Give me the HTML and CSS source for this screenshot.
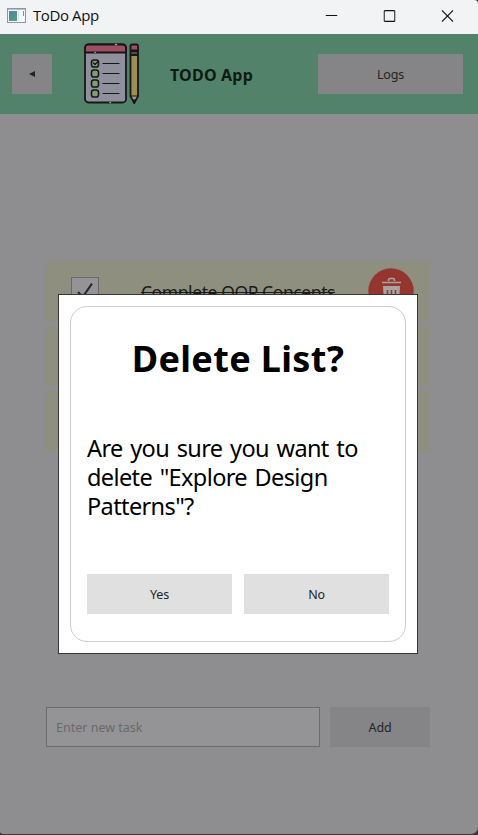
FILE: index.html
```html
<!DOCTYPE html>
<html lang="en">
<head>
<meta charset="utf-8">
<title>ToDo App</title>
<link rel="stylesheet" href="styles.css">
</head>
<body>
<div class="window">
  <header class="titlebar">
    <svg class="app-icon" width="19" height="16" viewBox="0 0 19 16"><defs><linearGradient id="ic" x1="0" y1="0" x2="1" y2="1"><stop offset="0" stop-color="#4c86a5"/><stop offset="1" stop-color="#55a080"/></linearGradient></defs><rect x=".5" y=".5" width="18" height="14" fill="#f5f8fa" stroke="#8d979f"/><path d="M1 1.5h17" stroke="#b8c1c7"/><rect x="2" y="3" width="8" height="10" fill="url(#ic)"/><path d="M11.5 3v10" stroke="#dce4e8"/><path d="M16.5 3v5" stroke="#62a18b"/></svg>
    <span class="app-name">ToDo App</span>
    <div class="controls">
      <svg width="12" height="12" viewBox="0 0 12 12"><path d="M0 5.5h12" stroke="#111" fill="none"/></svg>
      <svg width="12" height="12" viewBox="0 0 12 12"><rect x=".6" y=".6" width="10.8" height="10.8" rx="1" stroke="#111" stroke-width="1.2" fill="none"/></svg>
      <svg width="12" height="12" viewBox="0 0 12 12"><path d="M.4.4l11.2 11.2M11.6.4L.4 11.6" stroke="#111" stroke-width="1.2" fill="none"/></svg>
    </div>
  </header>
  <nav class="toolbar">
    <button class="btn back"><svg width="6" height="6" viewBox="0 0 6 6"><path d="M6 0v6L0 3z" fill="#222"/></svg></button>
    <svg class="logo" width="56" height="62" viewBox="0 0 56 62" stroke="#151719" stroke-width="1.8" stroke-linejoin="round" stroke-linecap="round">
      <rect x="1" y="1.5" width="41" height="58" rx="3.5" fill="#8f909c"/>
      <path d="M1 9.5V5q0-3.500 3.500-3.500H38.500Q42 1.500 42 5v4.500z" fill="#9e4f61"/>
      <path d="M31.500 1.500h1M11 9.500h.2M26 59.500h.5" stroke="#a4a5ad" stroke-width="1.500"/>
      <g fill="#7f9f72" stroke-width="1.600"><rect x="7.500" y="17" width="7" height="7" rx="2.300"/><rect x="7.500" y="27" width="7" height="7" rx="2.300"/><rect x="7.500" y="37" width="7" height="7" rx="2.300"/><rect x="7.500" y="47" width="7" height="7" rx="2.300"/></g>
      <path d="M9.500 20l1.500 1.500 3-3" fill="none" stroke-width="1.300"/>
      <path d="M19 20.500h16M19 30.500h16M19 40.500h16M19 50.500h16" stroke-width="1.200"/>
      <path d="M46.500 12h7.500v41l-3.750 7-3.750-7z" fill="#a08d55"/>
      <path d="M46.700 53h7.100l-3.550 6.500z" fill="#aa9282" stroke-width="1.200"/><path d="M49 57h2.500l-1.250 3z" fill="#151719" stroke-width="1"/>
      <path d="M46.500 7.500V3q0-1.500 1.500-1.500h4.500q1.500 0 1.500 1.500v4.500z" fill="#9e4f61"/>
      <path d="M46.500 8h7.500v4h-7.500z" fill="#4c4d52"/>
    </svg>
    <h1 class="brand">TODO App</h1>
    <button class="btn logs">Logs</button>
  </nav>
  <main class="content">
    <ul class="tasks">
      <li class="task">
        <span class="check"><svg width="28" height="28" viewBox="0 0 28 28"><path d="M6.500 15l5 5.500L21.500 6" fill="none" stroke="#2b2b2d" stroke-width="2.300"/></svg></span>
        <span class="task-name">Complete OOP Concepts</span>
        <span class="trash"><svg width="46" height="46" viewBox="0 0 46 46"><circle cx="23" cy="23" r="22.700" fill="#95352f"/><path d="M14 14.500h19M20.500 13v-1q0-1.500 1.500-1.500h3q1.500 0 1.500 1.500v1" fill="none" stroke="#aaa2a3" stroke-width="1.600"/><path d="M15 18h17l-1 16H16z" fill="#aaa2a3"/><path d="M19.500 22v9M23.500 22v9M27.500 22v9" stroke="#95352f" stroke-width="1.500"/></svg></span>
      </li>
      <li class="task"></li>
      <li class="task"></li>
    </ul>
    <form class="add-row">
      <input class="entry" placeholder="Enter new task">
      <button class="btn add" type="button">Add</button>
    </form>
  </main>
</div>
<div class="dialog">
  <div class="panel">
    <h2 class="question">Delete List?</h2>
    <p class="message">Are you sure you want to<br>delete "Explore Design<br>Patterns"?</p>
    <div class="actions"><button class="choice">Yes</button><button class="choice">No</button></div>
  </div>
</div>
</body>
</html>
```

FILE: styles.css
```css
* { box-sizing: border-box; }
body { margin: 0; background: #38383a; font-family: "Noto Sans", sans-serif; font-size: 12.5px; letter-spacing: -.2px; }
button, input { font: inherit; letter-spacing: inherit; border-radius: 0; padding: 0; }
.window { width: 478px; height: 834px; display: flex; flex-direction: column; overflow: hidden; background: #8e8e90; border-radius: 0 4px 7px 3px; }
.titlebar { height: 34px; flex: none; display: flex; align-items: center; background: #f1f3f5; padding: 0 24px 3px 7px; }
.app-name { font: 15px "Open Sans", sans-serif; color: #111; margin: -1px 0 0 7px; letter-spacing: -.4px; }
.controls { margin-left: auto; display: flex; gap: 46px; transform: translateX(-.5px); }
.controls svg, .app-icon, .logo { display: block; flex: none; }
.toolbar { height: 80px; flex: none; display: flex; align-items: center; background: #52836a; padding: 0 15px 0 12px; }
.btn { border: 0; background: #858486; color: #242426; height: 40px; }
.back { width: 40px; display: flex; align-items: center; justify-content: center; }
.logo { margin-left: 32px; }
.brand { margin: 2px 0 0 30px; font-size: 16px; font-weight: bold; color: #101a14; white-space: nowrap; letter-spacing: .2px; }
.logs { width: 145px; margin-left: auto; }
.content { flex: 1; padding: 147px 48px 0 46px; display: flex; flex-direction: column; }
.tasks { list-style: none; margin: 0; padding: 0; display: flex; flex-direction: column; gap: 5px; }
.task { height: 60px; background: #8f8f80; display: flex; align-items: center; padding: 0 16px 0 25px; }
.check { width: 28px; height: 28px; border: 1px solid #69696b; background: #949496; display: flex; align-items: center; justify-content: center; }
.task-name { flex: 1; text-align: center; font-size: 17.5px; letter-spacing: -.4px; color: #1b1b19; text-decoration: line-through; padding: 1px 0 0 9px; }
.trash svg { display: block; }
.add-row { display: flex; gap: 10px; margin: 256px 0 0; }
.entry { width: 274px; height: 40px; border: 1px solid #6c6c6e; background: #949496; padding: 0 9px; }
.entry::placeholder { color: #69696b; opacity: 1; letter-spacing: 0; }
.add { width: 100px; }
.dialog { position: absolute; left: 58px; top: 294px; width: 360px; height: 360px; border: 1px solid #363638; background: #fff; padding: 11px; }
.panel { height: 336px; border: 1px solid #ccc; border-radius: 17px; padding: 30px 16px 0; color: #000; }
.question { margin: 0; height: 44px; line-height: 44px; font-size: 36px; text-align: center; white-space: nowrap; letter-spacing: .35px; }
.message { margin: 53px 0 0; font-size: 23.5px; line-height: 29px; height: 87px; white-space: nowrap; letter-spacing: -.62px; word-spacing: 2.1px; }
.actions { display: flex; gap: 12px; margin-top: 53px; }
.choice { width: 145px; height: 40px; border: 0; background: #e0e0e0; color: #242424; }
```
